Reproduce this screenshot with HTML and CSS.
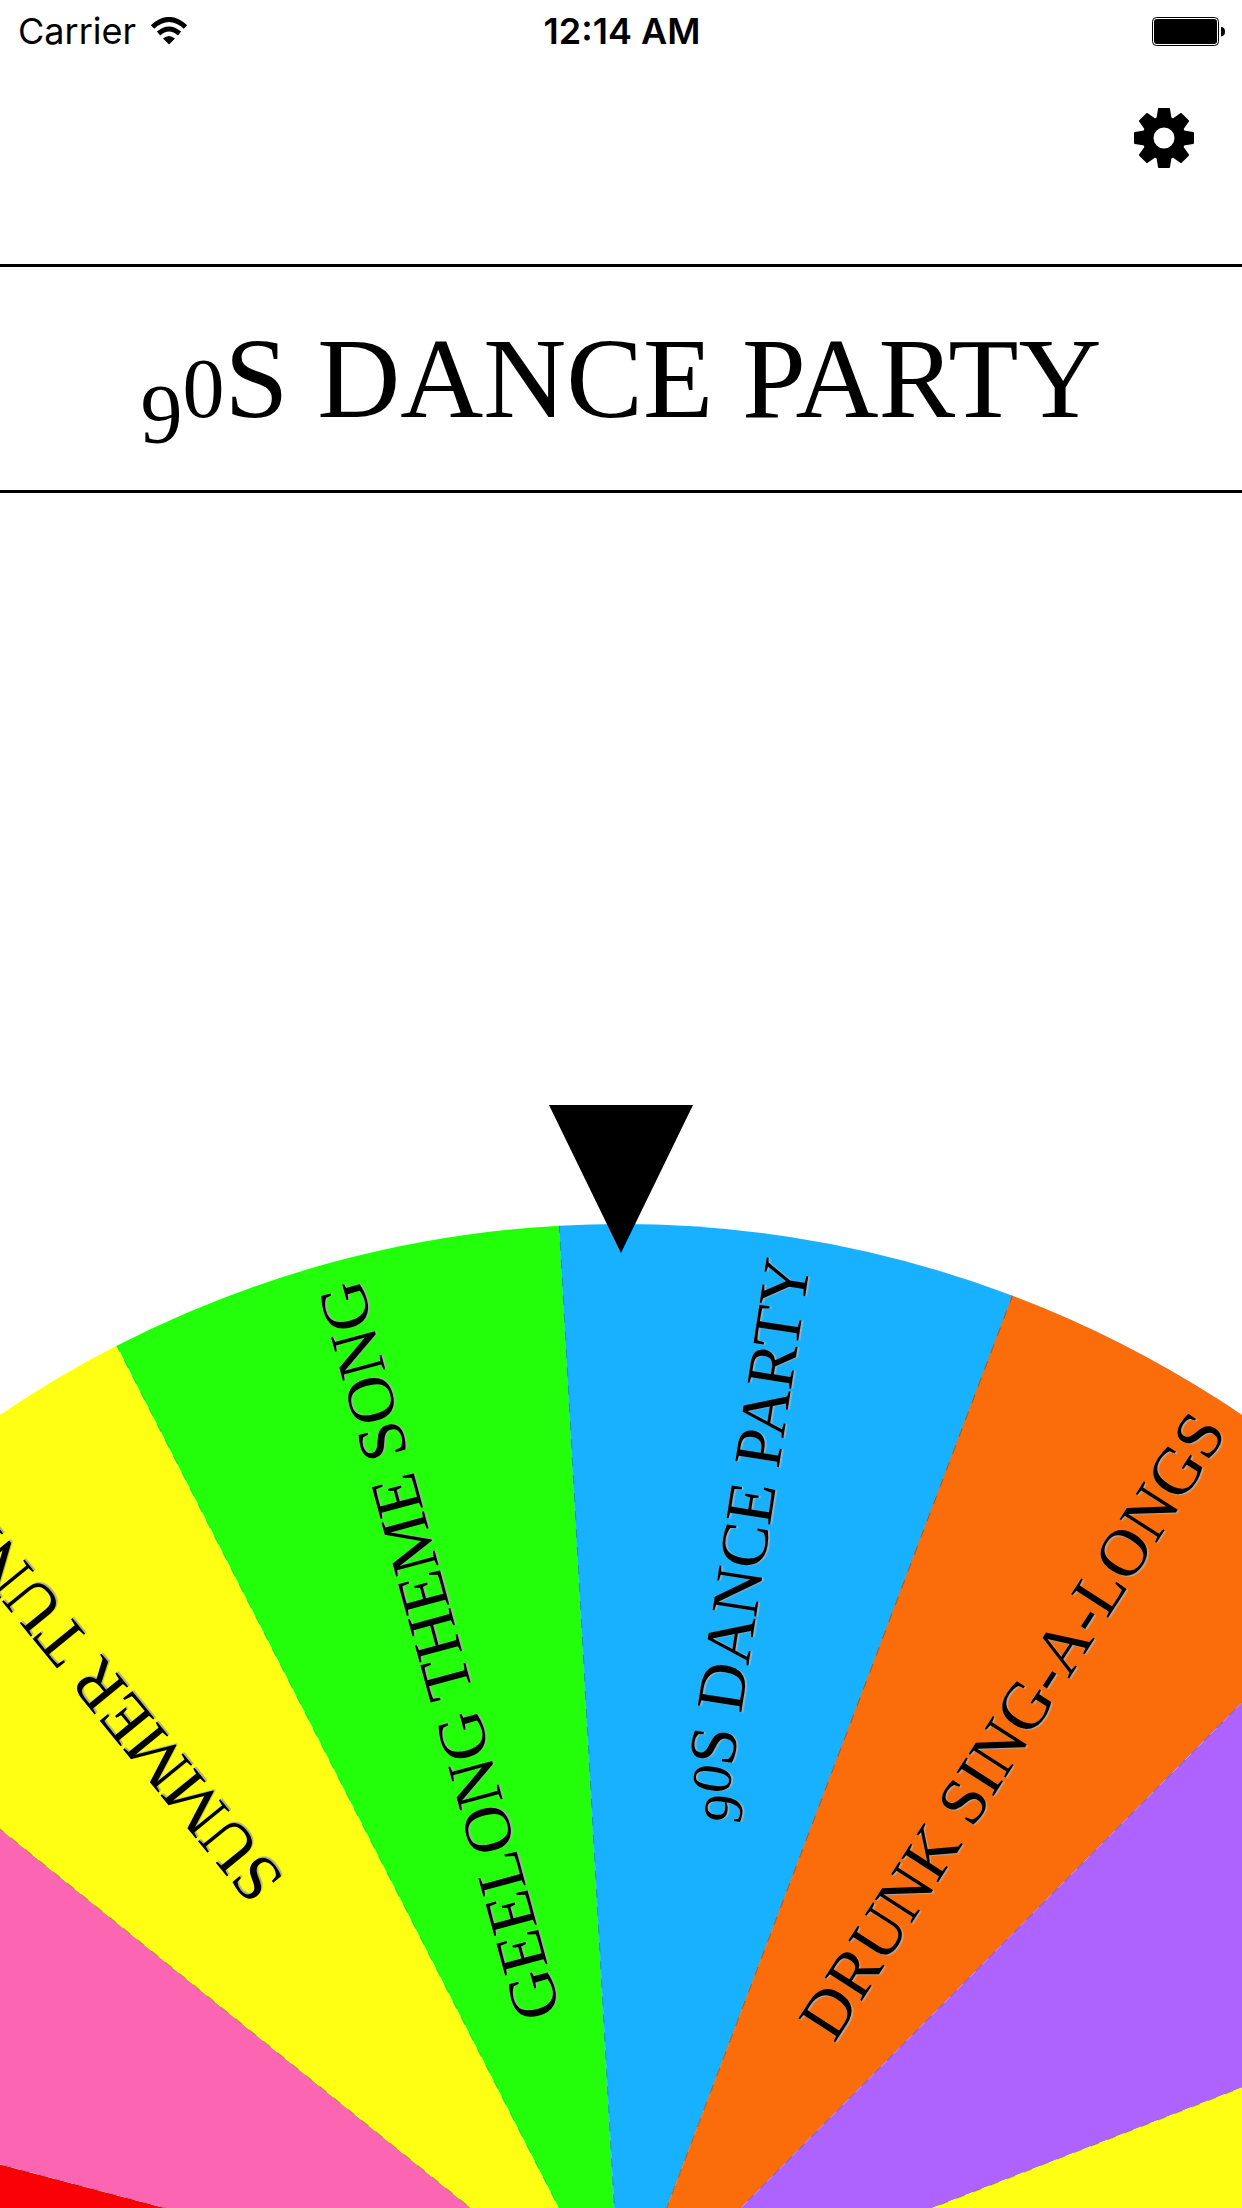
FILE: index.html
```html
<!DOCTYPE html>
<html lang="en">
<head>
<meta charset="utf-8">
<meta name="viewport" content="width=device-width, initial-scale=1">
<title>Party Wheel</title>
<link rel="stylesheet" href="styles.css">
</head>
<body>
<div class="status-bar">
  <div class="carrier">
    <span>Carrier</span>
    <svg class="wifi" viewBox="0 0 38 28" aria-hidden="true">
      <path d="M2.500 10Q19-5 35.500 10" fill="none" stroke="#000" stroke-width="5"/>
      <path d="M8.500 16.500Q19 7.500 29.500 16.500" fill="none" stroke="#000" stroke-width="5"/>
      <path d="M13 21.500Q19 16.500 25 21.500L19 27.500Z"/>
    </svg>
  </div>
  <time class="clock">12:14 AM</time>
  <div class="power">
    <svg class="battery" viewBox="0 0 74 29" aria-hidden="true">
      <rect x=".5" y=".5" width="66" height="28" rx="4" fill="none" stroke="#000"/>
      <rect x="2" y="2" width="63" height="25" rx="3"/>
      <path d="M69 10Q73 10 73 14.500T69 19.500Z"/>
    </svg>
  </div>
</div>

<header class="toolbar">
  <button class="settings" type="button" aria-label="Settings">
    <svg class="gear" viewBox="-30 -30 60 60" aria-hidden="true">
      <defs>
        <path id="tooth" d="M-8-17L-6-29Q-6-30-5-30H5Q6-30 6-29L8-17Z"/>
      </defs>
      <circle r="16" fill="none" stroke="#000" stroke-width="11"/>
      <use href="#tooth"/>
      <use href="#tooth" transform="rotate(45)"/>
      <use href="#tooth" transform="rotate(90)"/>
      <use href="#tooth" transform="rotate(135)"/>
      <use href="#tooth" transform="rotate(180)"/>
      <use href="#tooth" transform="rotate(225)"/>
      <use href="#tooth" transform="rotate(270)"/>
      <use href="#tooth" transform="rotate(315)"/>
    </svg>
  </button>
</header>

<h1 class="result"><span class="nine">9</span><span class="zero">0</span>S DANCE PARTY</h1>

<main class="stage">
  <svg class="wheel" viewBox="0 0 1242 1104" role="img" aria-label="Prize wheel">
    <defs>
      <!-- one 24 degree slice, centred on twelve o'clock -->
      <path id="slice" d="M0 0L-229.700-1080.900A1105 1105 0 0 1 229.700-1080.900Z"/>
      <path id="seam" d="M0 0V-1105"/>
    </defs>
    <g transform="translate(621 1225)">
      <use href="#slice" fill="#fa0007" transform="rotate(-87.150)"/>
      <use href="#slice" fill="#fb65b1" transform="rotate(-63.150)"/>
      <use href="#slice" fill="#ffff13" transform="rotate(-39.150)"/>
      <use href="#slice" fill="#23ff0a" transform="rotate(-15.150)"/>
      <use href="#slice" fill="#18b1ff" transform="rotate(8.800)"/>
      <use href="#slice" fill="#fb6c0b" transform="rotate(32.750)"/>
      <use href="#slice" fill="#ae63ff" transform="rotate(56.750)"/>
      <use href="#slice" fill="#ffff13" transform="rotate(80.750)"/>
      <g class="seams">
        <use href="#seam" transform="rotate(-75.150)"/>
        <use href="#seam" transform="rotate(-51.150)"/>
        <use href="#seam" transform="rotate(-27.150)"/>
        <use href="#seam" transform="rotate(-3.200)"/>
        <use href="#seam" transform="rotate(20.750)"/>
        <use href="#seam" transform="rotate(44.750)"/>
        <use href="#seam" transform="rotate(68.750)"/>
      </g>
      <g class="labels">
        <text x="1083" y="25" transform="rotate(-129.250)">SUMMER TUNES</text>
        <text x="1083" y="25" transform="rotate(-105.250)">GEELONG THEME SONG</text>
        <text x="1083" y="25" transform="rotate(-81.250)"><tspan class="small" dy="16">9</tspan><tspan class="small" dy="-16">0</tspan>S DANCE PARTY</text>
        <text x="1083" y="25" transform="rotate(-57.250)">DRUNK SING-A-LONGS</text>
      </g>
    </g>
    <path d="M549 1H693L621 149Z"/>
  </svg>
</main>
</body>
</html>
```
FILE: styles.css
```css
* {
  box-sizing: border-box;
}

body {
  display: flex;
  flex-direction: column;
  min-height: 100vh;
  margin: 0;
  background: #fff;
  color: #000;
  font-family: "Liberation Serif", "Times New Roman", serif;
  overflow-x: hidden;
}

.status-bar {
  display: grid;
  grid-template-columns: 1fr auto 1fr;
  align-items: center;
  height: 62px;
  padding: 0 16px 0 18px;
  font: 400 36px/60px Inter, sans-serif;
}

.carrier {
  display: flex;
  align-items: center;
  gap: 14px;
}

.wifi {
  width: 38px;
  height: 28px;
}

.clock {
  font-weight: 600;
}

.power {
  display: flex;
  justify-content: flex-end;
}

.battery {
  width: 74px;
  height: 29px;
}

.toolbar {
  display: flex;
  justify-content: flex-end;
  height: 202px;
  padding: 34px 36px 0;
}

.settings {
  width: 84px;
  height: 84px;
  padding: 12px;
  border: 0;
  background: none;
  cursor: pointer;
}

.gear {
  display: block;
  width: 60px;
  height: 60px;
}

.result {
  margin: 0;
  padding: 48px 0 47px;
  border: solid #000;
  border-width: 3px 0;
  font-size: 115px;
  font-weight: 400;
  line-height: 128px;
  text-align: center;
  white-space: nowrap;
}

.nine,
.zero {
  font-size: 84px;
  line-height: 0;
}

.nine {
  vertical-align: -26px;
}

.stage {
  margin-top: auto;
  overflow: hidden;
}

.wheel {
  display: block;
  width: 100%;
  height: auto;
}

.seams {
  stroke: #000;
  stroke-dasharray: 9 9;
  stroke-opacity: 0.25;
}

.labels {
  font-size: 67px;
  text-anchor: end;
  text-shadow: 0 2px 1px #aaa;
}

.small {
  font-size: 56px;
}
```
